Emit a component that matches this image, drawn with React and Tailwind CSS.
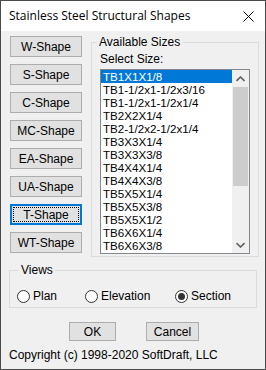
import { useState } from 'react'

const SHAPES = ['W-Shape', 'S-Shape', 'C-Shape', 'MC-Shape', 'EA-Shape', 'UA-Shape', 'T-Shape', 'WT-Shape']

const SIZES = [
  'TB1X1X1/8',
  'TB1-1/2x1-1/2x3/16',
  'TB1-1/2x1-1/2x1/4',
  'TB2X2X1/4',
  'TB2-1/2x2-1/2x1/4',
  'TB3X3X1/4',
  'TB3X3X3/8',
  'TB4X4X1/4',
  'TB4X4X3/8',
  'TB5X5X1/4',
  'TB5X5X3/8',
  'TB5X5X1/2',
  'TB6X6X1/4',
  'TB6X6X3/8',
]

function Radio({ label, checked }) {
  return (
    <div className="flex items-center gap-[3px]">
      <span className="flex h-[13px] w-[13px] items-center justify-center rounded-full border border-[#333] bg-white">
        {checked && <span className="h-[7px] w-[7px] rounded-full bg-[#333]" />}
      </span>
      <span>{label}</span>
    </div>
  )
}

function WinButton({ children, focused, className = '' }) {
  return (
    <button
      className={
        'flex items-stretch justify-center bg-[#e1e1e1] leading-none ' +
        (focused ? 'border-2 border-[#0078d7] p-[1px] ' : 'items-center border border-[#adadad] ') +
        className
      }
    >
      {focused ? (
        <span className="flex flex-1 items-center justify-center border border-dotted border-black">{children}</span>
      ) : (
        <span className="self-center">{children}</span>
      )}
    </button>
  )
}

export default function App() {
  const [sel] = useState(0)
  return (
    <div
      className="flex h-[370px] w-[266px] flex-col border border-[#4a4a4a] bg-[#f0f0f0] text-[12px] text-black"
      style={{ fontFamily: '"Liberation Sans", Arial, sans-serif' }}
    >
      <div className="flex h-[30px] shrink-0 items-center justify-between bg-white pl-[8px] pr-[9px]">
        <span className="text-[12px]" style={{ fontFamily: '"Open Sans", "Noto Sans", sans-serif' }}>
          Stainless Steel Structural Shapes
        </span>
        <svg width="11" height="11" viewBox="0 0 11 11" className="mr-[2px]">
          <path d="M0.5 0.5 L10.5 10.5 M10.5 0.5 L0.5 10.5" stroke="#000" strokeWidth="1" />
        </svg>
      </div>

      <div className="flex pl-[9px] pt-[5px]">
        <div className="flex flex-col gap-[7px]">
          {SHAPES.map((s) => (
            <WinButton key={s} focused={s === 'T-Shape'} className="h-[21px] w-[72px]">
              {s}
            </WinButton>
          ))}
        </div>
        <fieldset className="-mt-[1px] ml-[9px] h-[222px] w-[167px] border border-[#dcdcdc] px-[8px]">
          <legend className="-mb-[1px] ml-[-3px] px-[2px] leading-[14px]">Available Sizes</legend>
          <div className="mt-[4px] leading-[14px]">Select Size:</div>
          <div className="mt-[3px] flex h-[185px] w-[150px] border border-[#828790] bg-white">
            <div className="flex-1">
              {SIZES.map((s, i) => (
                <div
                  key={s}
                  className={
                    'h-[13px] whitespace-nowrap pl-[2px] text-[11.6px] leading-[13px] ' +
                    (i === sel ? 'bg-[#0078d7] text-white' : '')
                  }
                >
                  {s}
                </div>
              ))}
            </div>
            <div className="flex w-[17px] flex-col bg-[#f0f0f0]">
              <div className="flex h-[17px] items-center justify-center">
                <svg width="9" height="6" viewBox="0 0 9 6">
                  <path d="M0.5 5 L4.5 1 L8.5 5" stroke="#606060" strokeWidth="1.6" fill="none" />
                </svg>
              </div>
              <div className="mx-[1px] h-[99px] bg-[#cdcdcd]" />
              <div className="flex-1" />
              <div className="flex h-[17px] items-center justify-center">
                <svg width="9" height="6" viewBox="0 0 9 6">
                  <path d="M0.5 1 L4.5 5 L8.5 1" stroke="#606060" strokeWidth="1.6" fill="none" />
                </svg>
              </div>
            </div>
          </div>
        </fieldset>
      </div>

      <fieldset className="mx-[8px] mt-[6px] h-[45px] border border-[#dcdcdc] pl-[7px]">
        <legend className="ml-[2px] px-[2px] leading-[14px]">Views</legend>
        <div className="mt-[10px] flex">
          <div className="w-[68px]">
            <Radio label="Plan" />
          </div>
          <div className="w-[90px]">
            <Radio label="Elevation" />
          </div>
          <Radio label="Section" checked />
        </div>
      </fieldset>

      <div className="mt-[14px] flex gap-[30px] pl-[68px]">
        <WinButton className="h-[19px] w-[47px]">OK</WinButton>
        <WinButton className="h-[19px] w-[53px]">Cancel</WinButton>
      </div>

      <div className="mt-[7px] pl-[8px] leading-[14px]">Copyright (c) 1998-2020 SoftDraft, LLC</div>
    </div>
  )
}
